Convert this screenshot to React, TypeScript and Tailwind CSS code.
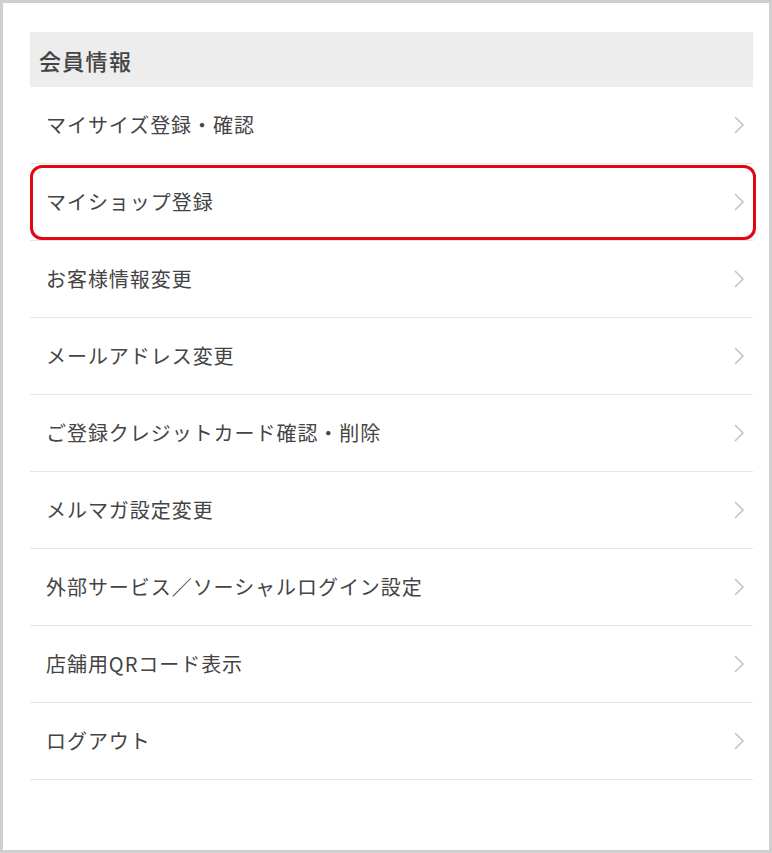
import React from "react";

const items = [
  "マイサイズ登録・確認",
  "マイショップ登録",
  "お客様情報変更",
  "メールアドレス変更",
  "ご登録クレジットカード確認・削除",
  "メルマガ設定変更",
  "外部サービス／ソーシャルログイン設定",
  "店舗用QRコード表示",
  "ログアウト",
];

function Chevron() {
  return (
    <svg width="12" height="20" viewBox="0 0 12 20" className="shrink-0">
      <path d="M2 2 L10 10 L2 18" fill="none" stroke="#c4c4c4" strokeWidth="1.6" />
    </svg>
  );
}

export default function App() {
  return (
    <div
      className="w-[772px] h-[853px] border-[3px] border-[#cfcfcf] bg-white pt-[29px] pl-[27px] pr-[16px] box-border"
      style={{ fontFamily: '"Noto Sans CJK JP", "Noto Sans", sans-serif' }}
    >
      <div className="h-[55px] bg-[#ededed] flex items-center pl-[9px]">
        <span className="text-[22px] font-medium text-[#444] leading-none tracking-[1.3px]">会員情報</span>
      </div>
      <ul>
        {items.map((t, i) => (
          <li key={t} className="relative h-[77px] border-b border-[#e6e6e6] flex items-center justify-between pl-[16px] pr-[8px]">
            <span className="text-[20px] text-[#444] leading-none tracking-[0.95px]">{t}</span>
            <Chevron />
            {i === 1 && (
              <div className="absolute left-0 right-[-3px] top-[1px] h-[75px] border-[3px] border-[#e00712] rounded-[12px]" />
            )}
          </li>
        ))}
      </ul>
    </div>
  );
}
